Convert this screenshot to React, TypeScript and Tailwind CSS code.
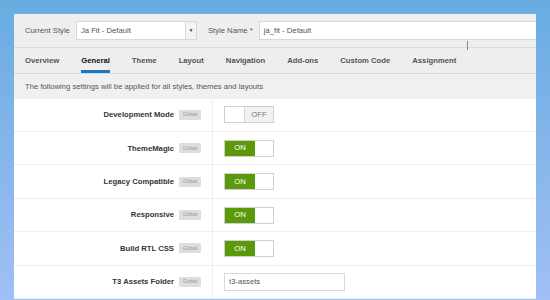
import React from "react";

type Row = {
  label: string;
  kind: "on" | "off" | "text";
  value?: string;
};

const ROWS: Row[] = [
  { label: "Development Mode", kind: "off" },
  { label: "ThemeMagic", kind: "on" },
  { label: "Legacy Compatible", kind: "on" },
  { label: "Responsive", kind: "on" },
  { label: "Build RTL CSS", kind: "on" },
  { label: "T3 Assets Folder", kind: "text", value: "t3-assets" },
];

const TABS = [
  "Overview",
  "General",
  "Theme",
  "Layout",
  "Navigation",
  "Add-ons",
  "Custom Code",
  "Assignment",
];

function Toggle({ on }: { on: boolean }) {
  return (
    <div className="flex h-[17px] w-[50px] border border-[#cfcfcf] bg-white text-[7.7px]">
      {on ? (
        <>
          <div className="flex w-[30px] items-center justify-center bg-[#5b990b] text-white">
            ON
          </div>
          <div className="flex-1 bg-white" />
        </>
      ) : (
        <>
          <div className="w-[19px] bg-white" />
          <div className="flex flex-1 items-center justify-center border-l border-[#d6d6d6] bg-[#f2f2f2] text-[#777]">
            OFF
          </div>
        </>
      )}
    </div>
  );
}

function Badge() {
  return (
    <span className="flex h-[10px] w-[22px] items-center justify-center rounded-[1px] bg-[#dedede] text-[5px] text-[#9a9a9a]">
      Global
    </span>
  );
}

export default function App() {
  return (
    <div
      className="relative h-[300px] w-[550px] overflow-hidden bg-linear-to-b from-[#67ace0] to-[#a0bff6] pl-[14px] pt-[14px]"
      style={{ fontFamily: '"Liberation Sans", Arial, sans-serif' }}
    >
      <div className="w-[522px] bg-white text-[7.7px]">
        {/* style picker bar */}
        <div className="relative flex h-[34px] items-center border-b border-[#dadada] bg-[#eeeeee] pl-[11px]">
          <span className="text-[#555]">Current Style</span>
          <div className="ml-[6px] flex h-[19px] w-[121px] border border-[#d8d8d8] bg-white">
            <span className="flex flex-1 items-center pl-[4px] text-[#555]">
              Ja Fit - Default
            </span>
            <span className="flex w-[11px] items-center justify-center border-l border-[#d8d8d8] bg-[#f4f4f4] text-[5px] text-[#444]">
              ▼
            </span>
          </div>
          <span className="ml-[11px] text-[#555]">Style Name *</span>
          <div className="ml-[6px] flex h-[19px] flex-1 items-center border border-r-0 border-[#d8d8d8] bg-white pl-[4px] text-[#555]">
            ja_fit - Default
          </div>
          <div className="absolute left-[453px] top-[27px] h-[9px] w-px bg-[#888]" />
        </div>

        {/* tabs */}
        <div className="flex h-[26px] gap-[22px] border-b border-[#d8d8d8] bg-[#eeeeee] pl-[11px] font-bold">
          {TABS.map((t) => (
            <div
              key={t}
              className={
                "relative flex items-center " +
                (t === "General" ? "text-[#111]" : "text-[#555]")
              }
            >
              {t}
              {t === "General" && (
                <div className="absolute bottom-0 left-0 right-0 h-[3px] bg-[#1a78c2]" />
              )}
            </div>
          ))}
        </div>

        {/* description */}
        <div className="flex h-[24.7px] items-center bg-[#f0f0f0] pl-[11px] text-[#555]">
          The following settings will be applied for all styles, themes and layouts
        </div>

        {/* settings rows */}
        {ROWS.map((r) => (
          <div key={r.label} className="flex h-[33.4px] border-b border-[#eeeeee]">
            <div className="flex w-[199px] items-center justify-end gap-[5px] border-r border-[#eeeeee] pr-[11px]">
              <span className="font-bold text-[#333]">{r.label}</span>
              <Badge />
            </div>
            <div className="flex items-center pl-[11px]">
              {r.kind === "text" ? (
                <div className="flex h-[18px] w-[121px] items-center border border-[#d9d9d9] bg-white pl-[4px] text-[#555]">
                  {r.value}
                </div>
              ) : (
                <Toggle on={r.kind === "on"} />
              )}
            </div>
          </div>
        ))}
      </div>
    </div>
  );
}
